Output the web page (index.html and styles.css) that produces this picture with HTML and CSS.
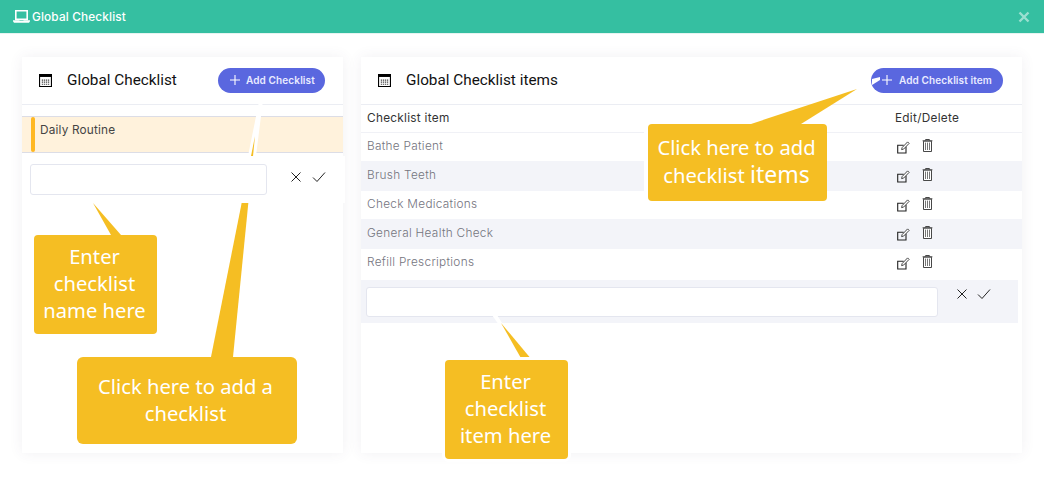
FILE: index.html
```html
<!DOCTYPE html>
<html lang="en">
<head>
<meta charset="utf-8">
<title>Global Checklist</title>
<link rel="stylesheet" href="styles.css">
</head>
<body>
<svg width="0" height="0" class="defs" aria-hidden="true">
  <symbol id="cal" viewBox="0 0 14 14">
    <path d="M.6.6h12.800v12.800H.6z" fill="#fff" stroke="#000" stroke-width="1.200"/>
    <path d="M0 0h14v3.200H0z" fill="#000"/>
    <path d="M3 6h1.400v1.200H3zM5.200 6h1.400v1.200H5.200zM7.400 6h1.400v1.200H7.400zM9.600 6h1.400v1.200H9.600zM3 8.200h1.400v1.200H3zM5.200 8.200h1.400v1.200H5.200zM7.400 8.200h1.400v1.200H7.400zM9.600 8.200h1.400v1.200H9.600zM3 10.400h1.400v1.200H3zM5.200 10.400h1.400v1.200H5.200zM7.400 10.400h1.400v1.200H7.400zM9.600 10.400h1.400v1.200H9.600z" fill="#444"/>
  </symbol>
  <symbol id="plus" viewBox="0 0 12 12"><path d="M6 1v10M1 6h10" stroke="#fff" stroke-width="1.100" fill="none"/></symbol>
  <symbol id="x" viewBox="0 0 12 12"><path d="M1.500 1.500l9 9M10.500 1.500l-9 9" stroke="#222" stroke-width="1" fill="none"/></symbol>
  <symbol id="check" viewBox="0 0 14 12"><path d="M1 6.500l4 4L13 1.500" stroke="#222" stroke-width="1" fill="none"/></symbol>
  <symbol id="edit" viewBox="0 0 13 13">
    <path d="M9 5.500v6.500H.7V4.200h6" stroke="#222" stroke-width="1.100" fill="none"/>
    <path d="M4.600 8.600l.5-2L10.600.9l1.500 1.500-5.500 5.700z" stroke="#333" stroke-width=".9" fill="#fff"/>
  </symbol>
  <symbol id="trash" viewBox="0 0 11 13">
    <path d="M3.600 1.400V.5h3.800v.9M.6 1.800h9.800" stroke="#333" stroke-width=".9" fill="none"/>
    <path d="M1.500 2.200h8v10.300h-8z" stroke="#333" stroke-width=".9" fill="#fff"/>
    <path d="M3.500 3.600v7.400M5.500 3.600v7.400M7.500 3.600v7.400" stroke="#777" stroke-width="1" fill="none"/>
  </symbol>
</svg>

<header class="topbar">
  <div class="topbar-title">
    <svg class="laptop" viewBox="0 0 17 13" width="17" height="13"><path d="M2.800.8h11.400v8.600H2.800z" fill="none" stroke="#fff" stroke-width="1.600"/><path d="M0 10.200h6.200l.6.6h3.400l.6-.6H17v1l-1 1.500H1l-1-1.500z" fill="#fff"/></svg>
    <span>Global Checklist</span>
  </div>
  <svg class="close" viewBox="0 0 12 12" width="12" height="12"><path d="M1.500 1.500l9 9M10.500 1.500l-9 9" stroke="#fff" stroke-opacity=".5" stroke-width="2.400" fill="none"/></svg>
</header>

<main class="content">
  <section class="card card-left">
    <div class="card-head">
      <div class="head-title"><svg class="cal"><use href="#cal"/></svg><h2>Global Checklist</h2></div>
      <button class="add-btn btn-left"><svg class="plus"><use href="#plus"/></svg>Add Checklist</button>
    </div>
    <div class="list">
      <div class="list-row"><span class="accent"></span><span>Daily Routine</span></div>
    </div>
    <div class="list-form">
      <input class="field field-left" type="text" aria-label="Checklist name">
      <svg class="ic-x"><use href="#x"/></svg>
      <svg class="ic-check"><use href="#check"/></svg>
    </div>
  </section>

  <section class="card card-right">
    <div class="card-head">
      <div class="head-title"><svg class="cal"><use href="#cal"/></svg><h2>Global Checklist items</h2></div>
      <button class="add-btn btn-right"><svg class="plus"><use href="#plus"/></svg>Add Checklist item</button>
    </div>
    <div class="table">
      <div class="t-head"><span class="c-name">Checklist item</span><span class="c-act">Edit/Delete</span></div>
      <div class="t-row"><span class="c-name">Bathe Patient</span><span class="c-act"><svg class="ic-edit"><use href="#edit"/></svg><svg class="ic-trash"><use href="#trash"/></svg></span></div>
      <div class="t-row alt"><span class="c-name">Brush Teeth</span><span class="c-act"><svg class="ic-edit"><use href="#edit"/></svg><svg class="ic-trash"><use href="#trash"/></svg></span></div>
      <div class="t-row"><span class="c-name">Check Medications</span><span class="c-act"><svg class="ic-edit"><use href="#edit"/></svg><svg class="ic-trash"><use href="#trash"/></svg></span></div>
      <div class="t-row alt"><span class="c-name">General Health Check</span><span class="c-act"><svg class="ic-edit"><use href="#edit"/></svg><svg class="ic-trash"><use href="#trash"/></svg></span></div>
      <div class="t-row last"><span class="c-name">Refill Prescriptions</span><span class="c-act"><svg class="ic-edit"><use href="#edit"/></svg><svg class="ic-trash"><use href="#trash"/></svg></span></div>
      <div class="t-form">
        <input class="field field-right" type="text" aria-label="Checklist item name">
        <svg class="ic-x"><use href="#x"/></svg>
        <svg class="ic-check"><use href="#check"/></svg>
      </div>
    </div>
  </section>
</main>

<svg class="tails" viewBox="0 0 1044 489" width="1044" height="489" aria-hidden="true">
  <path class="halo" d="M258.500 104L262.500 104L256 156L248 156Z"/>
  <path class="tail" d="M255 136L233 357L211 357Z"/>
  <path class="tail" d="M93 203L121 235L111 235Z"/>
  <path class="halo" d="M872 79L880 77L880 80L872 85Z"/>
  <path class="tail" d="M857 89L801 124L751 124Z"/>
  <path class="halo" d="M492 315L497 315L504 326L499 325Z"/>
  <path class="tail" d="M501 323L532 360L522 360Z"/>
</svg>

<div class="callout c-name-tip">Enter<br>checklist<br>name here</div>
<div class="callout c-add-tip">Click here to add a<br>checklist</div>
<div class="callout c-items-tip">Click here to add<br>checklist <span class="big">items</span></div>
<div class="callout c-item-tip">Enter<br>checklist<br>item here</div>
</body>
</html>
```
FILE: styles.css
```css
* { box-sizing: border-box; }
html, body { margin: 0; padding: 0; }
body {
  position: relative;
  width: 1044px;
  height: 489px;
  overflow: hidden;
  background: #fff;
  font-family: Inter, "Liberation Sans", sans-serif;
  color: #3f4254;
}
.defs { position: absolute; }

.topbar {
  height: 33px;
  background: #35bfa1;
  display: flex;
  align-items: center;
  justify-content: space-between;
  padding: 0 14px 0 13px;
  box-shadow: 0 1px 0 #e6f4f1;
}
.topbar-title { display: flex; align-items: center; gap: 2px; color: #fff; font-size: 11.800px; font-weight: 500; letter-spacing: .15px; }
.close { display: block; }

.content {
  display: flex;
  gap: 18px;
  padding: 24px 22px 0;
}
.card {
  position: relative;
  height: 396px;
  background: #fff;
  box-shadow: 0 0 13px rgba(82, 63, 105, .08);
}
.card-left { width: 321px; }
.card-right { width: 661px; }

.card-head {
  height: 48px;
  display: flex;
  align-items: center;
  justify-content: space-between;
  border-bottom: 1px solid #ebedf3;
  padding: 0 18px 1px 17px;
}
.card-right .card-head { padding-right: 19px; padding-left: 17px; }
.head-title { display: flex; align-items: center; gap: 15px; }
.cal { width: 13px; height: 13px; display: block; }
.head-title h2 {
  margin: 0;
  font-family: Roboto, sans-serif;
  font-size: 15.300px;
  font-weight: 400;
  color: #111;
}
.add-btn {
  height: 25px;
  border: 0;
  border-radius: 13px;
  background: #5a67df;
  color: #e9ebff;
  font-family: Inter, sans-serif;
  font-size: 10px;
  font-weight: 600;
  letter-spacing: .12px;
  display: flex;
  align-items: center;
  padding: 0;
}
.btn-left { width: 107px; padding-left: 11px; gap: 5px; }
.btn-right { width: 132px; padding-left: 10px; gap: 6px; }
.plus { width: 12px; height: 12px; display: block; }

.list { margin-top: 11px; }
.list-row {
  height: 37px;
  display: flex;
  align-items: flex-start;
  background: #fff2dc;
  border-top: 1px solid #dcdde6;
  border-bottom: 1px solid #dcdde6;
  font-size: 11.800px;
  letter-spacing: .18px;
  line-height: 26px;
  color: #444;
  padding-left: 9px;
}
.accent {
  width: 4px;
  height: 35px;
  border-radius: 2px;
  background: #ffb822;
  margin-right: 5px;
}
.list-form {
  position: relative;
  z-index: 2;
  width: 323px;
  height: 47px;
  margin-top: 3px;
  background: #fff;
  display: flex;
  align-items: center;
  padding-left: 8px;
}
.field {
  display: block;
  height: 31px;
  background: #fff;
  border: 1px solid #e4e6ef;
  border-radius: 3px;
  outline: 0;
}
.field-left { width: 237px; margin-right: 23px; }
.ic-x { width: 12px; height: 12px; display: block; }
.ic-check { width: 14px; height: 12px; display: block; }
.list-form .ic-x, .list-form .ic-check { margin-top: -6px; }
.list-form .ic-check { margin-left: 10px; }

.table { font-size: 11.800px; letter-spacing: .3px; }
.t-head {
  height: 28px;
  display: flex;
  align-items: center;
  border-bottom: 1px solid #f0f1f6;
  color: #333;
  font-weight: 400;
  padding-bottom: 2px;
  letter-spacing: .28px;
}
.c-name { width: 534px; padding-left: 6px; }
.c-act { display: flex; align-items: flex-start; }
.t-row {
  height: 28px;
  display: flex;
  align-items: center;
  color: #74747e;
  font-weight: 300;
  padding-bottom: 2px;
}
.t-row.alt { height: 30px; background: #f3f4f9; padding-bottom: 2px; }
.t-row.last { height: 31px; padding-bottom: 6px; }
.t-row .c-act { padding: 2px 0 0 2px; }
.ic-edit { width: 13px; height: 13px; display: block; margin-top: 1px; }
.ic-trash { width: 11px; height: 13px; display: block; margin: -1px 0 0 12px; }
.t-form {
  width: 657px;
  height: 43px;
  background: #f3f4f9;
  display: flex;
  align-items: flex-start;
  padding: 7px 0 0 5px;
}
.field-right { width: 572px; height: 30px; margin-right: 18px; }
.t-form .ic-x { margin-top: 1px; }
.t-form .ic-check { margin: 1px 0 0 9px; }

.tails { position: absolute; left: 0; top: 0; z-index: 1; }
.tail { fill: #f5be23; }
.halo { fill: #fff; }

.callout {
  position: absolute;
  z-index: 3;
  background: #f5be23;
  color: #fff;
  border-radius: 4px;
  font-family: "Noto Sans", "Open Sans", sans-serif;
  font-size: 20.200px;
  line-height: 27px;
  text-align: center;
  padding-right: 2px;
}
.c-name-tip { left: 34px; top: 235px; width: 123px; height: 99px; padding-top: 8px; }
.c-add-tip { left: 77px; top: 357px; width: 220px; height: 87px; padding-top: 16px; padding-right: 3px; border-radius: 6px; }
.c-items-tip { left: 648px; top: 124px; width: 179px; height: 77px; padding-top: 10px; box-shadow: -4px 0 0 #fff; }
.c-item-tip { left: 445px; top: 360px; width: 123px; height: 99px; padding-top: 8px; box-shadow: 0 0 0 3px #fff; }
.big { font-size: 23px; }
```
